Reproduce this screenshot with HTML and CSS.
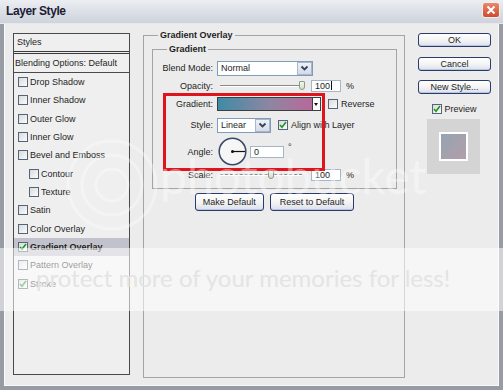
FILE: index.html
```html
<!DOCTYPE html>
<html lang="en">
<head>
  <meta charset="UTF-8" />
  <title>Layer Style</title>
  <link rel="stylesheet" href="styles.css">
</head>
<body>
  <div class="window">
    <div class="titlebar">
      <span class="title">Layer Style</span>
      <span class="close">
        <svg width="10" height="10" viewBox="0 0 10 10"><path d="M1.5 1.5L8.5 8.5M8.5 1.5L1.5 8.5" stroke="#fff" stroke-width="2"/></svg>
      </span>
    </div>

    <div class="frame">
      <ul class="styles-list">
        <li class="list-head">Styles</li>
        <li class="list-blend">Blending Options: Default</li>
        <li class="item"><span class="cb"></span>Drop Shadow</li>
        <li class="item"><span class="cb"></span>Inner Shadow</li>
        <li class="item"><span class="cb"></span>Outer Glow</li>
        <li class="item"><span class="cb"></span>Inner Glow</li>
        <li class="item"><span class="cb"></span>Bevel and Emboss</li>
        <li class="item sub"><span class="cb"></span>Contour</li>
        <li class="item sub"><span class="cb"></span>Texture</li>
        <li class="item"><span class="cb"></span>Satin</li>
        <li class="item"><span class="cb"></span>Color Overlay</li>
        <li class="item selected"><span class="cb"><svg width="8" height="8" viewBox="0 0 8 8"><path d="M1 4l2 2.2L7 1" fill="none" stroke="#1f9a22" stroke-width="1.7"/></svg></span>Gradient Overlay</li>
        <li class="item"><span class="cb"></span>Pattern Overlay</li>
        <li class="item"><span class="cb"><svg width="8" height="8" viewBox="0 0 8 8"><path d="M1 4l2 2.2L7 1" fill="none" stroke="#1f9a22" stroke-width="1.7"/></svg></span>Stroke</li>
      </ul>

      <fieldset class="group-outer">
        <legend>Gradient Overlay</legend>
        <fieldset class="group-inner">
          <legend>Gradient</legend>
          <div class="rows">
            <div class="row">
              <span class="label">Blend Mode:</span>
              <div class="select blend"><span class="value">Normal</span><span class="drop"><svg width="9" height="7" viewBox="0 0 9 7"><path d="M1.5 1.5L4.5 4.5L7.5 1.5" fill="none" stroke="#33405e" stroke-width="1.8"/></svg></span></div>
            </div>
            <div class="row r-opacity">
              <span class="label">Opacity:</span>
              <div class="slider"><span class="track"></span><span class="thumb" style="left: 82px"></span></div>
              <span class="field num">100<span class="caret"></span></span>
              <span class="unit">%</span>
            </div>
            <div class="row r-gradient">
              <span class="label">Gradient:</span>
              <div class="gradient"><span class="bar"></span><span class="arrow"></span></div>
              <span class="check"><span class="cb"></span>Reverse</span>
            </div>
            <div class="row r-style">
              <span class="label">Style:</span>
              <div class="select style"><span class="value">Linear</span><span class="drop"><svg width="9" height="7" viewBox="0 0 9 7"><path d="M1.5 1.5L4.5 4.5L7.5 1.5" fill="none" stroke="#33405e" stroke-width="1.8"/></svg></span></div>
              <span class="check"><span class="cb"><svg width="8" height="8" viewBox="0 0 8 8"><path d="M1 4l2 2.2L7 1" fill="none" stroke="#1f9a22" stroke-width="1.7"/></svg></span>Align with Layer</span>
            </div>
            <div class="row r-angle">
              <span class="label">Angle:</span>
              <svg class="dial" width="29" height="29" viewBox="0 0 29 29">
                <circle cx="14.5" cy="14.5" r="13.3" fill="#f6f6f6" stroke="#3b4766" stroke-width="1.5"/>
                <line x1="14.5" y1="14.5" x2="27" y2="14.5" stroke="#111" stroke-width="1.2"/>
                <circle cx="14.5" cy="14.5" r="1.5" fill="#111"/>
              </svg>
              <span class="field angle">0</span>
              <span class="deg">°</span>
            </div>
            <div class="row r-scale">
              <span class="label">Scale:</span>
              <div class="slider"><span class="track dotted"></span><span class="thumb" style="left: 51px"></span></div>
              <span class="field num">100</span>
              <span class="unit">%</span>
            </div>
            <div class="highlight"></div>
          </div>
        </fieldset>
        <div class="actions">
          <button class="btn big">Make Default</button>
          <button class="btn big">Reset to Default</button>
        </div>
      </fieldset>

      <div class="side">
        <button class="btn">OK</button>
        <button class="btn">Cancel</button>
        <button class="btn">New Style...</button>
        <span class="check preview-check"><span class="cb"><svg width="8" height="8" viewBox="0 0 8 8"><path d="M1 4l2 2.2L7 1" fill="none" stroke="#1f9a22" stroke-width="1.7"/></svg></span>Preview</span>
        <div class="preview"><div class="preview-swatch"></div></div>
      </div>
    </div>

    <!-- watermark over the screenshot -->
    <div class="watermark">
      <svg class="wm-rings" width="110" height="110" viewBox="0 0 110 110">
        <circle cx="55" cy="55" r="16" fill="none" stroke="#fff" stroke-width="3"/>
        <circle cx="55" cy="55" r="30" fill="none" stroke="#fff" stroke-width="3"/>
        <circle cx="55" cy="55" r="44" fill="none" stroke="#fff" stroke-width="3"/>
      </svg>
      <span class="wm-logo">photobucket</span>
      <div class="wm-band"></div>
      <span class="wm-text">protect more of your memories for less!</span>
    </div>
  </div>
</body>
</html>
```

FILE: styles.css
```css
* {
  box-sizing: border-box;
  margin: 0;
  padding: 0;
}

body {
  font-family: "Liberation Sans", Arial, sans-serif;
  font-size: 9px;
  color: #1e1e1e;
  background: #8f939c;
}

.window {
  position: relative;
  width: 503px;
  height: 390px;
  overflow: hidden;
}

.titlebar {
  height: 24px;
  display: flex;
  justify-content: space-between;
  align-items: flex-start;
  padding: 2px 3px 0 6px;
  background: linear-gradient(#eceef2, #d6dae2 70%, #cfd3dc);
  border-bottom: 1px solid #e8e8ea;
}

.title {
  font-size: 12px;
  font-weight: bold;
  letter-spacing: -0.4px;
  color: #1c1c34;
  line-height: 18px;
}

.close {
  width: 18px;
  height: 16px;
  display: flex;
  align-items: center;
  justify-content: center;
  border: 1px solid #f4f0ee;
  border-radius: 3px;
  background: linear-gradient(#e9896c, #cf4b2e);
}

.frame {
  height: 366px;
  display: flex;
  align-items: flex-start;
  padding-left: 9px;
  background: #ececec;
  border: solid #979ba4;
  border-width: 0 4px 4px;
  box-shadow: inset 1px 0 0 #fafafa, inset -1px 0 0 #fafafa, inset 0 -1px 0 #fafafa;
}

/* lista de estilos */
.styles-list {
  list-style: none;
  width: 117px;
  height: 342px;
  margin-top: 9px;
  border: 1px solid #4a4a4a;
  background: #efefef;
}

.list-head {
  height: 20px;
  line-height: 16px;
  padding-left: 3px;
  border-bottom: 3px double #3a3a3a;
}

.list-blend {
  height: 19px;
  line-height: 18px;
  padding-left: 1px;
  border-bottom: 1px solid #4a4a4a;
}

.item {
  height: 18.33px;
  display: flex;
  align-items: center;
  gap: 2px;
  padding-left: 4px;
}

.item.sub {
  padding-left: 15px;
}

.item.selected {
  background: #c2c2cc;
  font-weight: bold;
}

.cb {
  width: 10px;
  height: 10px;
  flex-shrink: 0;
  display: inline-flex;
  align-items: center;
  justify-content: center;
  border: 1px solid #56647a;
  background: linear-gradient(135deg, #d9dbdc, #fbfbfb);
}

/* grupo central */
.group-outer {
  width: 262px;
  height: 348px;
  min-width: 0;
  margin: 6px 0 0 13px;
  padding: 3px 7px 0 8px;
  border: 1px solid #a4a4a4;
}

.group-outer > legend {
  margin-left: 6px;
  padding: 0 2px;
  font-weight: bold;
  line-height: 11px;
}

.group-inner {
  min-width: 0;
  padding: 5px 0 5px 0;
  border: 1px solid #a4a4a4;
}

.group-inner > legend {
  margin-left: 14px;
  padding: 0 2px;
  font-weight: bold;
  line-height: 11px;
}

.rows {
  position: relative;
}

.row {
  display: flex;
  align-items: center;
  height: 16px;
}

.label {
  width: 60px;
  margin-right: 4px;
  text-align: right;
}

.r-opacity,
.r-gradient {
  margin-top: 2px;
}

.r-style {
  margin-top: 4px;
  height: 18px;
}

.r-angle {
  margin-top: 3px;
  height: 29px;
}

.r-scale {
  margin-top: 1px;
}

.select {
  display: flex;
  height: 15px;
  background: #fff;
  border: 1px solid #7f9db9;
}

.select.blend {
  width: 96px;
}

.select.style {
  width: 54px;
}

.select .value {
  flex: 1;
  padding-left: 3px;
  line-height: 13px;
}

.select .drop {
  width: 15px;
  display: flex;
  align-items: center;
  justify-content: center;
  background: linear-gradient(#eef0f5, #d5dbe6);
  border: 1px solid #aab6cc;
}

.slider {
  position: relative;
  width: 88px;
  height: 12px;
  display: flex;
  align-items: center;
  padding: 0 3px;
}

.track {
  flex: 1;
  height: 2px;
  border-top: 1px solid #8a8a8a;
  border-bottom: 1px solid #fff;
}

.track.dotted {
  border-top-style: dashed;
}

.thumb {
  position: absolute;
  top: 1px;
  width: 6px;
  height: 9px;
  background: linear-gradient(#f2f6ee, #cfe0c4);
  border: 1px solid #8c9a86;
  border-radius: 1px 1px 3px 3px;
}

.field {
  height: 12px;
  line-height: 10px;
  padding-left: 3px;
  background: #fff;
  border: 1px solid #a6b6c9;
}

.field.num {
  width: 30px;
  margin-left: 6px;
}

.caret {
  display: inline-block;
  width: 1px;
  height: 9px;
  margin-left: 1px;
  vertical-align: -1px;
  background: #111;
}

.unit {
  margin-left: 5px;
}

.gradient {
  width: 104px;
  height: 14px;
  display: flex;
  border: 1px solid #3e3e3e;
}

.gradient .bar {
  flex: 1;
  background: linear-gradient(90deg, #3f8ba6, #8e86a2 55%, #b8689a);
}

.gradient .arrow {
  width: 8px;
  background: #fff;
  border-left: 1px solid #3e3e3e;
  position: relative;
}

.gradient .arrow::after {
  content: "";
  position: absolute;
  left: 1px;
  top: 5px;
  border: 2.5px solid transparent;
  border-top: 3px solid #111;
}

.check {
  display: flex;
  align-items: center;
  gap: 3px;
  margin-left: 7px;
}

.dial {
  margin-left: 1px;
}

.field.angle {
  width: 34px;
  margin-left: 3px;
}

.deg {
  margin-left: 4px;
  align-self: flex-start;
  margin-top: 5px;
}

.highlight {
  position: absolute;
  left: 10px;
  top: 33px;
  width: 162px;
  height: 78px;
  border: 3px solid #e0141c;
}

.actions {
  display: flex;
  justify-content: center;
  gap: 6px;
  margin-top: 4px;
}

.btn {
  font: inherit;
  color: #1e1e1e;
  width: 73px;
  height: 14px;
  border: 1px solid #2b3c6c;
  border-radius: 3px;
  background: linear-gradient(#ffffff, #f3f3f3 55%, #d9dfec);
  box-shadow: inset 0 -1px 0 #bac6e0;
}

.btn.big {
  width: auto;
  height: 18px;
  padding: 0 7px;
}

.btn.big + .btn.big {
  padding: 0 9px;
}

/* columna derecha */
.side {
  width: 73px;
  margin: 9px 0 0 13px;
  display: flex;
  flex-direction: column;
}

.side .btn + .btn {
  margin-top: 10px;
}

.side .btn:nth-child(3) {
  margin-top: 9px;
}

.preview-check {
  justify-content: center;
  margin: 10px 0 0 0;
  gap: 2px;
  height: 10px;
}

.preview {
  width: 53px;
  height: 55px;
  margin: 5px 0 0 9px;
  display: flex;
  align-items: center;
  justify-content: center;
  background: #d4d4d4;
}

.preview-swatch {
  width: 29px;
  height: 29px;
  border: 2px solid #fff;
  background: linear-gradient(135deg, #93a5b1, #b49eaa);
}

/* marca de agua */
.watermark {
  position: absolute;
  inset: 0;
  pointer-events: none;
}

.wm-rings {
  position: absolute;
  left: 57px;
  top: 130px;
  opacity: 0.35;
}

.wm-logo {
  position: absolute;
  left: 160px;
  top: 152px;
  font-family: Lato, sans-serif;
  font-size: 48px;
  line-height: 48px;
  color: rgba(255, 255, 255, 0.4);
}

.wm-band {
  position: absolute;
  left: 0;
  right: 0;
  top: 248px;
  height: 63px;
  background: rgba(255, 255, 255, 0.55);
}

.wm-text {
  position: absolute;
  left: 36px;
  top: 263px;
  font-family: Lato, sans-serif;
  font-size: 24px;
  line-height: 30px;
  color: #e4e4e4;
}
```
